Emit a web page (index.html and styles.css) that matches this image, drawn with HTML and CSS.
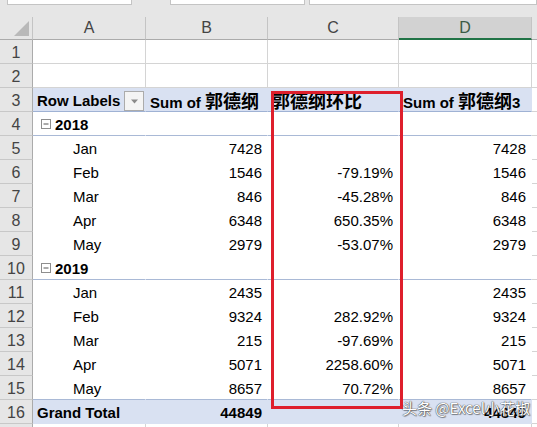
FILE: index.html
```html
<!DOCTYPE html>
<html>
<head>
<meta charset="utf-8">
<link rel="stylesheet" href="styles.css">
</head>
<body>
<div class="topbar"><div class="tb tb1"></div><div class="tb tb2"></div><div class="tb tb3"></div></div>
<div class="sheet">
  <div class="ch corner"><div class="tri"></div></div><div class="ch">A</div><div class="ch">B</div><div class="ch">C</div><div class="ch sel">D</div><div class="ch"></div>

  <div class="rh">1</div><div class="c"></div><div class="c"></div><div class="c"></div><div class="c"></div><div class="c"></div>
  <div class="rh">2</div><div class="c"></div><div class="c"></div><div class="c"></div><div class="c"></div><div class="c"></div>

  <div class="rh">3</div>
  <div class="c hd a3"><span>Row Labels</span><span class="dd"><svg width="9" height="5" viewBox="0 0 9 5"><path d="M1 0.5h7L4.5 4.5z" fill="#8a8a8a"/></svg></span></div>
  <div class="c hd">Sum of <span class="cjk">郭德纲</span></div>
  <div class="c hd"><span class="cjk">郭德纲环比</span></div>
  <div class="c hd">Sum of <span class="cjk">郭德纲</span>3</div>
  <div class="c"></div>

  <div class="rh">4</div>
  <div class="c p yr yrA"><svg class="tog" width="10" height="10" viewBox="0 0 10 10"><rect x="0.5" y="0.5" width="9" height="9" fill="#fff" stroke="#8e8e8e"/><path d="M2.5 5h5" stroke="#555"/></svg>2018</div>
  <div class="c p yr"></div><div class="c p yr"></div><div class="c p yr"></div><div class="c"></div>

  <div class="rh">5</div><div class="c p m">Jan</div><div class="c p n">7428</div><div class="c p n"></div><div class="c p n">7428</div><div class="c"></div>
  <div class="rh">6</div><div class="c p m">Feb</div><div class="c p n">1546</div><div class="c p n">-79.19%</div><div class="c p n">1546</div><div class="c"></div>
  <div class="rh">7</div><div class="c p m">Mar</div><div class="c p n">846</div><div class="c p n">-45.28%</div><div class="c p n">846</div><div class="c"></div>
  <div class="rh">8</div><div class="c p m">Apr</div><div class="c p n">6348</div><div class="c p n">650.35%</div><div class="c p n">6348</div><div class="c"></div>
  <div class="rh">9</div><div class="c p m">May</div><div class="c p n">2979</div><div class="c p n">-53.07%</div><div class="c p n">2979</div><div class="c"></div>

  <div class="rh">10</div>
  <div class="c p yr yrA"><svg class="tog" width="10" height="10" viewBox="0 0 10 10"><rect x="0.5" y="0.5" width="9" height="9" fill="#fff" stroke="#8e8e8e"/><path d="M2.5 5h5" stroke="#555"/></svg>2019</div>
  <div class="c p yr"></div><div class="c p yr"></div><div class="c p yr"></div><div class="c"></div>

  <div class="rh">11</div><div class="c p m">Jan</div><div class="c p n">2435</div><div class="c p n"></div><div class="c p n">2435</div><div class="c"></div>
  <div class="rh">12</div><div class="c p m">Feb</div><div class="c p n">9324</div><div class="c p n">282.92%</div><div class="c p n">9324</div><div class="c"></div>
  <div class="rh">13</div><div class="c p m">Mar</div><div class="c p n">215</div><div class="c p n">-97.69%</div><div class="c p n">215</div><div class="c"></div>
  <div class="rh">14</div><div class="c p m">Apr</div><div class="c p n">5071</div><div class="c p n">2258.60%</div><div class="c p n">5071</div><div class="c"></div>
  <div class="rh">15</div><div class="c p m last">May</div><div class="c p n last">8657</div><div class="c p n last">70.72%</div><div class="c p n last">8657</div><div class="c"></div>

  <div class="rh">16</div>
  <div class="c gt">Grand Total</div><div class="c gt n">44849</div><div class="c gt n"></div><div class="c gt n">44849</div><div class="c"></div>

  <div class="rh">17</div><div class="c"></div><div class="c"></div><div class="c"></div><div class="c"></div><div class="c"></div>
</div>
<div class="highlight"></div>
<div class="watermark">头条 @Excel小花椒</div>
</body>
</html>
```
FILE: styles.css
```css
html, body {
  margin: 0;
  padding: 0;
}
body {
  width: 537px;
  height: 427px;
  overflow: hidden;
  background: #fff;
  font-family: "Liberation Sans", Arial, "Noto Sans CJK SC", sans-serif;
  font-size: 15px;
  color: #000;
  position: relative;
}
.topbar {
  height: 17px;
  background: #e6e6e6;
  display: flex;
  align-items: flex-start;
}
.tb {
  height: 4px;
  background: #fff;
  border: 1px solid #c4c4c4;
  border-top: 0;
}
.tb1 { margin-left: 7px; width: 123px; }
.tb2 { margin-left: 38px; width: 134px; }
.tb3 { margin-left: 4px; width: 226px; }

.sheet {
  display: grid;
  grid-template-columns: 33px 113px 122px 131px 133px 1fr;
  grid-template-rows: 23px;
  grid-auto-rows: 24px;
}
.ch {
  box-sizing: border-box;
  background: #e6e6e6;
  border-right: 1px solid #c4c4c4;
  border-bottom: 1px solid #ababab;
  text-align: center;
  line-height: 22px;
  color: #444;
  font-size: 16px;
}
.ch.sel {
  background: #d2d2d2;
  border-bottom: 2px solid #217346;
  color: #3b5a46;
}
.corner {
  display: flex;
  justify-content: flex-end;
  align-items: flex-end;
  padding: 0 3px 3px 0;
}
.tri {
  width: 15px;
  height: 15px;
  background: #b9b9b9;
  clip-path: polygon(100% 0, 100% 100%, 0 100%);
}
.rh {
  box-sizing: border-box;
  background: #e6e6e6;
  border-right: 1px solid #ababab;
  border-bottom: 1px solid #c8c8c8;
  text-align: center;
  color: #444;
  padding-top: 3px;
  line-height: 20px;
  font-size: 16px;
}
.c {
  box-sizing: border-box;
  border-right: 1px solid #d4d4d4;
  border-bottom: 1px solid #d4d4d4;
  padding: 3px 4px 0 4px;
  line-height: 20px;
  white-space: nowrap;
  min-width: 0;
}
.cjk {
  font-family: "Noto Sans CJK SC", sans-serif;
  font-size: 18px;
  line-height: 18px;
}
.p {
  border-right-color: #fff;
  border-bottom-color: #fff;
}
.hd {
  background: #d9e1f2;
  font-weight: bold;
  border-right-color: #d9e1f2;
  border-bottom-color: #9fb2d4;
}
.a3 {
  display: flex;
  align-items: flex-start;
  padding-right: 1px;
}
.dd {
  margin-left: auto;
  width: 18px;
  height: 18px;
  background: #f4f4f4;
  border: 1px solid #ababab;
  display: flex;
  align-items: center;
  justify-content: center;
}
.yr {
  font-weight: bold;
  border-bottom-color: #a9b9d6;
}
.yrA {
  padding-left: 8px;
}
.tog {
  vertical-align: 1px;
  margin-right: 4px;
}
.m {
  padding-left: 40px;
}
.n {
  text-align: right;
  padding-right: 5px;
}
.last {
  border-bottom-color: #a9b9d6;
}
.gt {
  background: #d9e1f2;
  font-weight: bold;
  border-right-color: #d9e1f2;
  border-bottom-color: #d9e1f2;
}
.highlight {
  position: absolute;
  left: 271px;
  top: 91px;
  width: 132px;
  height: 318px;
  box-sizing: border-box;
  border: 3px solid #de1f2c;
}
.watermark {
  position: absolute;
  left: 402px;
  top: 398px;
  font-family: "Noto Sans CJK SC", sans-serif;
  font-size: 15px;
  line-height: 20px;
  color: #fff;
  white-space: nowrap;
  text-shadow: 0 0 1px #444, 0 0 1px #444, 1px 1px 1px rgba(0,0,0,0.4);
}
```
